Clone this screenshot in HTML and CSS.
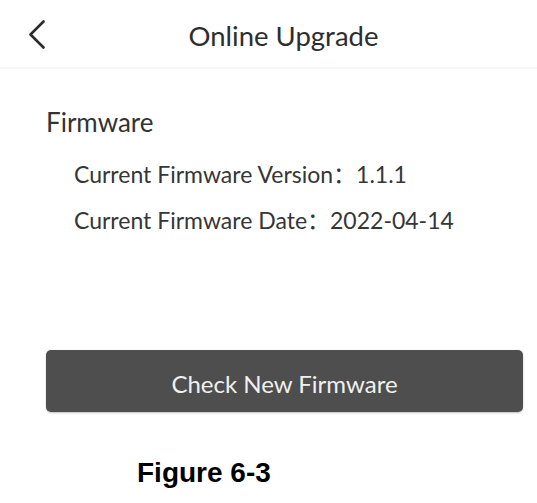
FILE: index.html
```html
<!DOCTYPE html>
<html lang="en">
<head>
<meta charset="utf-8">
<title>Online Upgrade</title>
<link rel="stylesheet" href="styles.css">
</head>
<body>
<div class="screen">
  <header class="topbar">
    <span class="back" aria-label="Back">
      <svg width="18" height="30" viewBox="0 0 18 30"><path d="M15.5 1.5 L2.5 14.5 L15.5 27.5" fill="none" stroke="#2b2b2b" stroke-width="2.6" stroke-linecap="round" stroke-linejoin="round"/></svg>
    </span>
    <h1 class="title">Online Upgrade</h1>
  </header>
  <section class="content">
    <h2 class="section-title">Firmware</h2>
    <div class="info">
      <p class="info-row">Current Firmware Version：1.1.1</p>
      <p class="info-row">Current Firmware Date：2022-04-14</p>
    </div>
  </section>
  <div class="actions">
    <button class="btn">Check New Firmware</button>
  </div>
  <p class="caption">Figure 6-3</p>
</div>
</body>
</html>
```
FILE: styles.css
```css
* { box-sizing: border-box; }
html, body { margin: 0; padding: 0; background: #fff; }
body { font-family: Lato, "Noto Sans CJK SC", sans-serif; color: #333; }
.screen { width: 537px; height: 503px; display: flex; flex-direction: column; }
.topbar {
  height: 69px;
  display: flex;
  align-items: center;
  justify-content: center;
  position: relative;
  border-bottom: 2px solid #f7f7f7;
}
.back { position: absolute; left: 28px; top: 20px; display: flex; }
.title { margin: 0; font-size: 27.5px; line-height: 32px; font-weight: 400; color: #2e2e2e; padding: 5px 0 0 30px; }
.content { padding: 38px 0 0 46px; }
.section-title { margin: 0; font-size: 26px; font-weight: 400; color: #333; line-height: 30px; }
.info { padding: 22px 0 0 28px; display: flex; flex-direction: column; gap: 16px; }
.info-row { margin: 0; font-size: 23px; line-height: 30px; color: #363636; }
.actions { padding: 115px 14px 0 46px; }
.btn {
  width: 477px;
  height: 62px;
  border: none;
  border-radius: 5px;
  background: #4e4e4e;
  color: #f0f0f0;
  font-family: Lato, "Noto Sans CJK SC", sans-serif;
  font-size: 24px;
  box-shadow: 0 1px 2px rgba(0,0,0,0.25);
  padding: 4px 0 0;
}
.caption {
  margin: 0;
  padding: 45px 0 0 137px;
  font-family: "Liberation Sans", Arial, sans-serif;
  font-weight: 700;
  font-size: 28px;
  line-height: normal;
  color: #000;
}
```
